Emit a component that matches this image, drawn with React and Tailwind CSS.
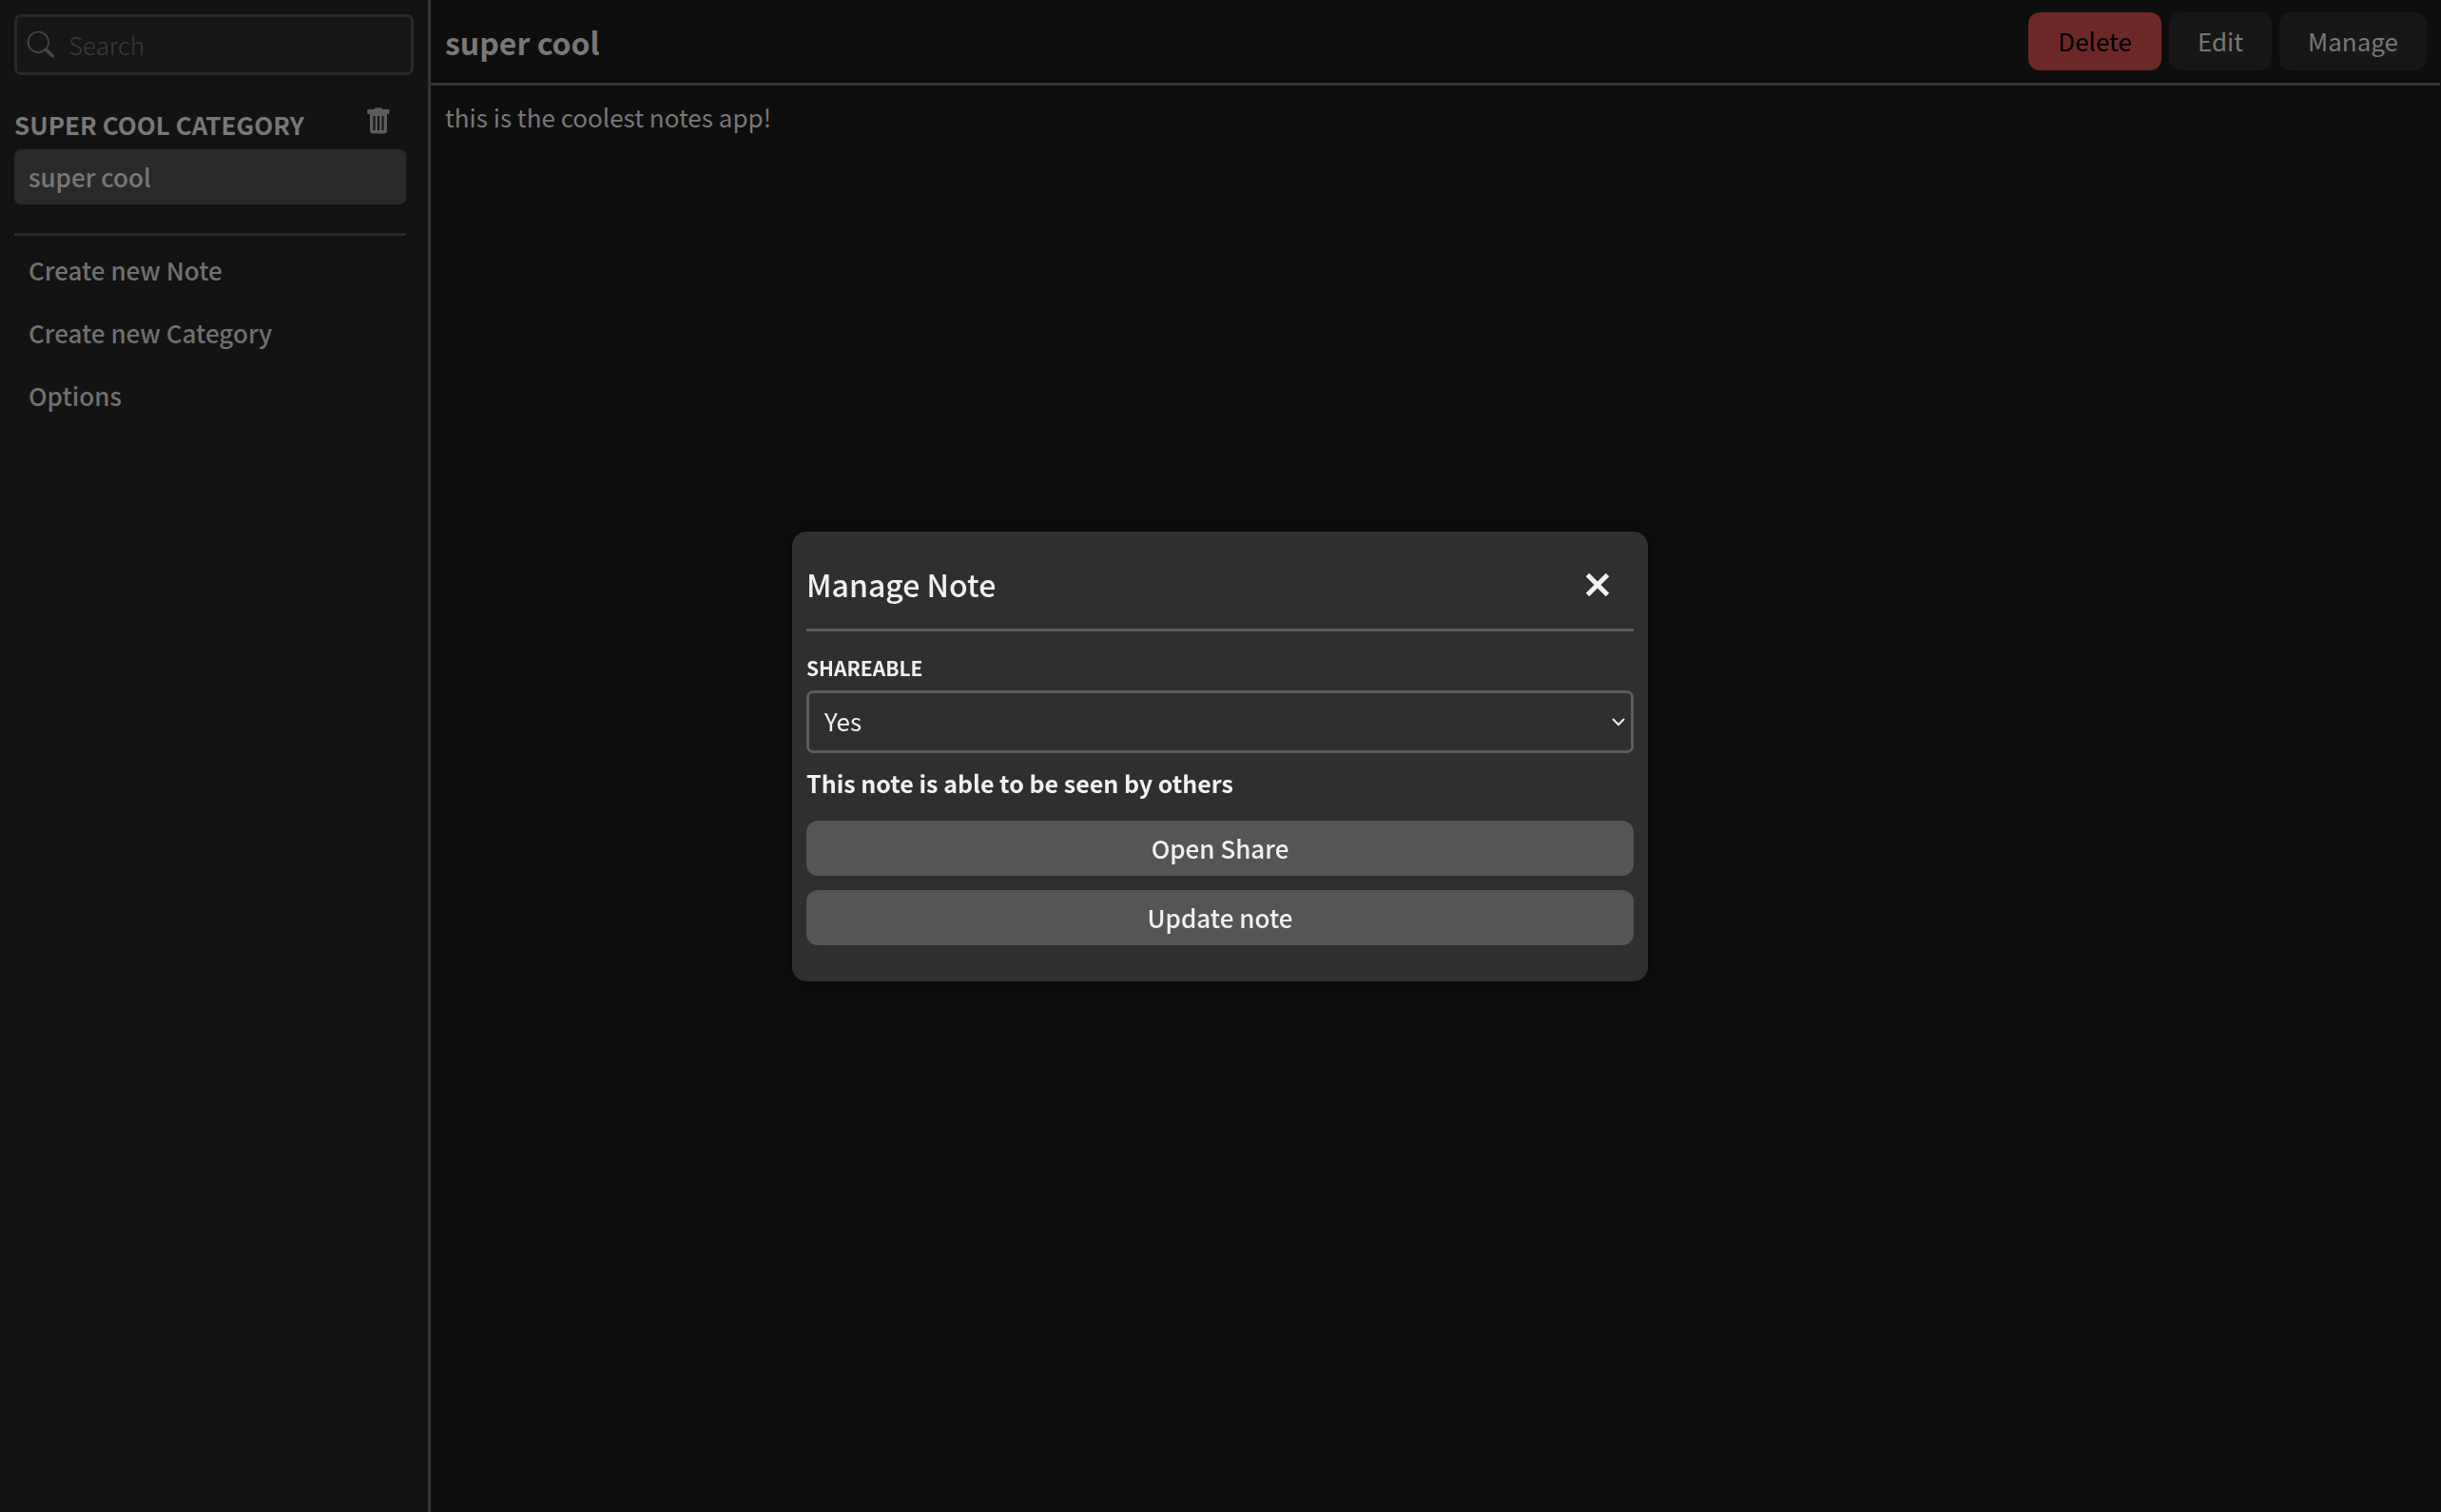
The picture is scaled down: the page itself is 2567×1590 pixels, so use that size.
const navItems = ['Create new Note', 'Create new Category', 'Options'];

function SearchIcon() {
  return (
    <svg className="pointer-events-none absolute left-3 top-3.5 size-8" viewBox="0 0 32 32" fill="none" stroke="#474747" aria-hidden="true">
      <circle cx="13.3" cy="15.3" r="10.8" strokeWidth="1.6" />
      <path d="M21.200 23 L28.400 30" strokeWidth="3.200" strokeLinecap="round" />
    </svg>
  );
}

function TrashIcon() {
  return (
    <svg className="h-7 w-6" viewBox="0 0 24 28" fill="#5c5c5c" aria-hidden="true">
      <path
        fillRule="evenodd"
        d="M9.500 0.300h5a1.500 1.500 0 0 1 1.500 1.500V2h6.300a1.300 1.300 0 0 1 1.300 1.300v2.400a1.300 1.300 0 0 1-1.300 1.300H21v17a3.600 3.600 0 0 1-3.600 3.600H6.600A3.600 3.600 0 0 1 3 24V7H1.500a1.300 1.300 0 0 1-1.300-1.300V3.300A1.300 1.300 0 0 1 1.500 2H8v-.2a1.500 1.500 0 0 1 1.500-1.500zM6.500 9v15h2V9zM11 9v15h2V9zM15.500 9v15h2V9z"
      />
    </svg>
  );
}

function Sidebar() {
  return (
    <aside className="flex w-[453px] shrink-0 flex-col border-r-[3px] border-[#333333] bg-[#131313] p-[15px]">
      <div className="relative">
        <SearchIcon />
        <input
          type="search"
          aria-label="Search"
          placeholder="Search"
          className="block h-16 w-full rounded-[7px] border-[3px] border-[#2a2a2a] bg-[#171717] pb-0.5 pl-[54px] pr-3 font-light text-[#777777] outline-none placeholder:text-[#3c3c3c]"
        />
      </div>
      <section className="mr-2 mt-[34px]">
        <div className="flex h-11 items-start justify-between pr-[17px]">
          <h2 className="font-bold uppercase text-[#787878]">super cool category</h2>
          <button type="button" aria-label="Delete category">
            <TrashIcon />
          </button>
        </div>
        <button type="button" className="block h-[58px] w-full rounded-[7px] bg-[#2a2a2a] px-[15px] text-left font-medium text-[#787878]">
          super cool
        </button>
      </section>
      <nav className="mr-2 mt-[30px] flex flex-col gap-2 border-t-[3px] border-[#2a2a2a] pt-[7px]">
        {navItems.map((item) => (
          <button key={item} type="button" className="h-[58px] px-[15px] text-left font-medium text-[#707070]">
            {item}
          </button>
        ))}
      </nav>
    </aside>
  );
}

function NoteView() {
  return (
    <main className="min-w-0 flex-1">
      <header className="flex h-[90px] items-center justify-between border-b-[3px] border-[#333333] pl-[15px] pr-3.5">
        <h1 className="text-[32px] font-bold text-[#787878]">super cool</h1>
        <div className="flex gap-2">
          <button type="button" className="h-[61px] rounded-xl bg-[#6d2828] px-[31px] pb-0.5 text-black">Delete</button>
          <button type="button" className="h-[61px] rounded-xl bg-[#171717] px-[30px] pb-0.5 text-[#787878]">Edit</button>
          <button type="button" className="h-[61px] rounded-xl bg-[#171717] px-[30px] pb-0.5 text-[#787878]">Manage</button>
        </div>
      </header>
      <p className="px-[15px] py-[15px] text-[#787878]">this is the coolest notes app!</p>
    </main>
  );
}

function ManageDialog() {
  return (
    <div className="fixed inset-0 flex items-center justify-center pr-px">
      <div role="dialog" aria-modal="true" aria-labelledby="manage-title" className="w-[900px] max-w-full rounded-[15px] bg-[#2f2f2f] px-[15px] pb-[38px] text-[#f2f0f0] shadow-[0_0_20px_rgba(0,0,0,0.6)]">
        <div className="flex h-[105px] items-center justify-between border-b-[3px] border-[#5c5c5c] pt-2.5 pr-6">
          <h2 id="manage-title" className="pb-0.5 text-[32px] font-medium leading-10">Manage Note</h2>
          <button type="button" aria-label="Close">
            <svg className="size-7" viewBox="0 0 28 28" stroke="currentColor" strokeWidth="5" fill="none" aria-hidden="true">
              <path d="M3.500 3.500 L24.500 24.500 M24.500 3.500 L3.500 24.500" />
            </svg>
          </button>
        </div>
        <label htmlFor="shareable" className="mt-[22px] block text-[21px] font-bold uppercase leading-8">Shareable</label>
        <div className="relative mt-2">
          <select id="shareable" defaultValue="Yes" className="block h-[66px] w-full appearance-none rounded-[7px] border-[3px] border-[#5c5c5c] bg-[#2f2f2f] px-4 pb-0.5 outline-none">
            <option>Yes</option>
            <option>No</option>
          </select>
          <svg className="pointer-events-none absolute right-2 top-7 h-3 w-4" viewBox="0 0 16 12" stroke="currentColor" strokeWidth="2" fill="none" aria-hidden="true">
            <path d="M2 2 L8 8 L14 2" />
          </svg>
        </div>
        <p className="mt-[11px] text-[25px] font-bold leading-10">This note is able to be seen by others</p>
        <div className="mt-5 flex flex-col gap-[15px]">
          <button type="button" className="h-[58px] rounded-xl bg-[#555555] font-medium">Open Share</button>
          <button type="button" className="h-[58px] rounded-xl bg-[#555555] font-medium">Update note</button>
        </div>
      </div>
    </div>
  );
}

export default function App() {
  return (
    <div className="flex min-h-screen bg-[#0e0e0e] pr-px font-['Noto_Sans_CJK_SC',sans-serif] text-[26px] leading-9">
      <Sidebar />
      <NoteView />
      <ManageDialog />
    </div>
  );
}
